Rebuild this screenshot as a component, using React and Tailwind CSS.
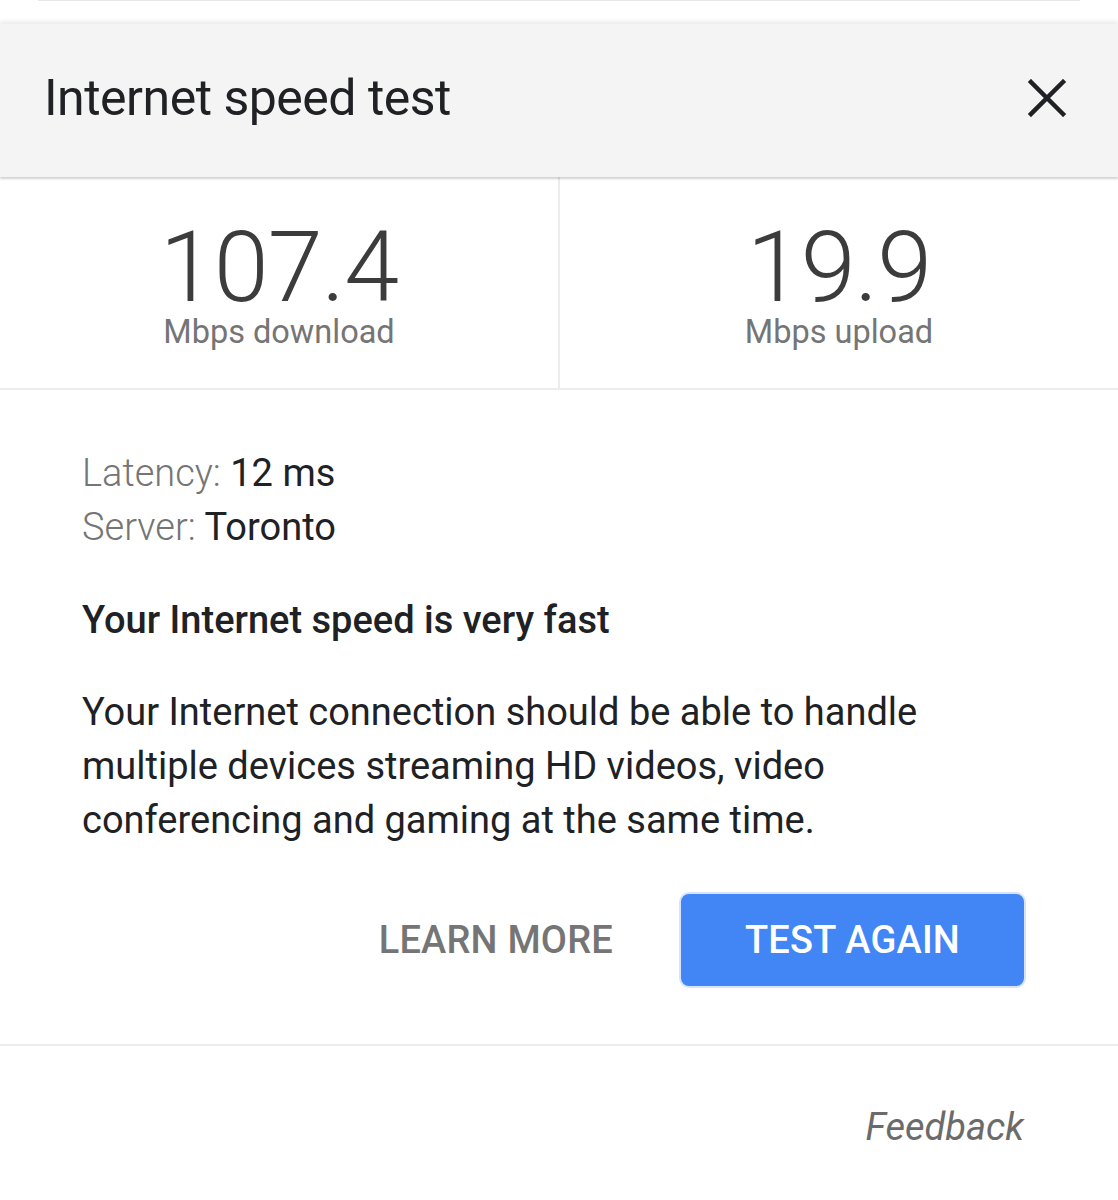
import React from 'react';

function CloseIcon() {
    return (
        <svg width="38" height="38" viewBox="0 0 38 38" fill="none" stroke="#202124" strokeWidth="4.5" strokeLinecap="square">
            <path d="M3 3L35 35M35 3L3 35" />
        </svg>
    );
}

function Stat({ value, label, border }) {
    return (
        <div className={`flex-1 flex flex-col items-center pt-[45px] ${border ? 'border-r-2 border-[#ececec]' : ''}`}>
            <div className="text-[99px] leading-[90px] font-light text-[#3c3c3c] tracking-[-1px]">{value}</div>
            <div className="text-[32.5px] leading-[36px] text-[#757575] mt-[2px]">{label}</div>
        </div>
    );
}

export default function App() {
    return (
        <div className="w-[1118px] h-[1200px] bg-white overflow-hidden" style={{ fontFamily: 'Roboto, "Liberation Sans", sans-serif' }}>
            <div className="h-[24px] bg-white border-t border-[#e8e8e8] mx-[38px]" />
            <div className="h-[153px] bg-[#f4f4f4] flex items-center justify-between pl-[44px] pr-[52px] shadow-[0_-3px_4px_rgba(0,0,0,0.08),0_2px_2px_rgba(0,0,0,0.18)] relative">
                <h1 className="text-[50px] text-[#202124] font-normal tracking-[-0.5px] pb-[4px]">Internet speed test</h1>
                <div className="pb-[5px]">
                    <CloseIcon />
                </div>
            </div>
            <div className="flex h-[213px] border-b-2 border-[#ececec]">
                <Stat value="107.4" label="Mbps download" border />
                <Stat value="19.9" label="Mbps upload" />
            </div>
            <div className="px-[82px] pt-[56px]">
                <div className="text-[38px] leading-[54px]">
                    <div><span className="text-[#757575] font-light">Latency:</span> <span className="text-[#202124]">12 ms</span></div>
                    <div><span className="text-[#757575] font-light">Server:</span> <span className="text-[#202124]">Toronto</span></div>
                </div>
                <div className="text-[38px] leading-[54px] font-medium text-[#202124] mt-[39px]">Your Internet speed is very fast</div>
                <p className="text-[38px] leading-[54px] text-[#202124] mt-[38px] w-[900px]">
                    Your Internet connection should be able to handle multiple devices streaming HD videos, video conferencing and gaming at the same time.
                </p>
                <div className="flex justify-end items-center gap-[66px] mt-[45px] pr-[10px]">
                    <button className="text-[38px] font-medium text-[#757575] tracking-[0.2px]">LEARN MORE</button>
                    <button className="w-[347px] h-[96px] rounded-[10px] bg-[#4285f4] border-2 border-[#d6e3fb] text-white text-[38px] font-medium tracking-[0.2px]">TEST AGAIN</button>
                </div>
            </div>
            <div className="border-t-2 border-[#ececec] mt-[56px]" />
            <div className="flex justify-end pr-[94px] pt-[53px]">
                <span className="text-[38px] italic text-[#6b6b6b]">Feedback</span>
            </div>
        </div>
    );
}
